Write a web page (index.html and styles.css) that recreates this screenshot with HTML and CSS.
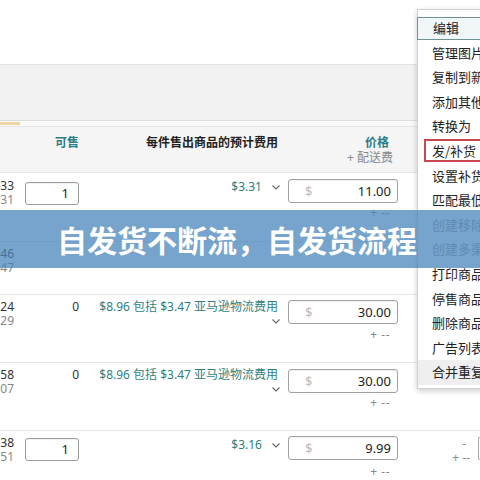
FILE: index.html
```html
<!DOCTYPE html>
<html>
<head>
<meta charset="utf-8">
<link rel="stylesheet" href="styles.css">
</head>
<body>
<div class="page">
  <div class="top"></div>
  <div class="band"></div>
  <div class="tabs"><div class="tab-active"></div></div>

  <div class="row head">
    <div class="c-num"></div>
    <div class="c-qty"><span class="h-link">可售</span></div>
    <div class="c-fee"><span class="h-bold">每件售出商品的预计费用</span></div>
    <div class="c-price"><div class="h-link price-h">价格</div><div class="h-sub">+ 配送费</div></div>
    <div class="c-extra"></div>
  </div>

  <div class="row r1">
    <div class="c-num"><div class="n1">33</div><div class="n2">31</div></div>
    <div class="c-qty"><div class="qty-input m3">1</div></div>
    <div class="c-fee"><div class="fee-line"><span class="fee">$3.31</span><svg class="chev" viewBox="0 0 8 5"><polyline points="0.5,0.5 4,4 7.5,0.5"/></svg></div></div>
    <div class="c-price"><div class="price-input"><span class="cur">$</span><span>11.00</span></div><div class="pm m3">+ --</div></div>
    <div class="c-extra"></div>
  </div>

  <div class="row r2">
    <div class="c-num"><div class="n1">46</div><div class="n2">47</div></div>
    <div class="c-qty"></div>
    <div class="c-fee"></div>
    <div class="c-price"></div>
    <div class="c-extra"></div>
  </div>

  <div class="row r3">
    <div class="c-num"><div class="n1">24</div><div class="n2">29</div></div>
    <div class="c-qty"><div class="qty-text">0</div></div>
    <div class="c-fee"><div class="fee fee-wrap">$8.96 包括 $3.47 亚马逊物流费用</div><div class="chev-line"><svg class="chev" viewBox="0 0 8 5"><polyline points="0.5,0.5 4,4 7.5,0.5"/></svg></div></div>
    <div class="c-price"><div class="price-input"><span class="cur">$</span><span>30.00</span></div><div class="pm m4">+ --</div></div>
    <div class="c-extra"></div>
  </div>

  <div class="row r4">
    <div class="c-num"><div class="n1">58</div><div class="n2">07</div></div>
    <div class="c-qty"><div class="qty-text">0</div></div>
    <div class="c-fee"><div class="fee fee-wrap">$8.96 包括 $3.47 亚马逊物流费用</div><div class="chev-line"><svg class="chev" viewBox="0 0 8 5"><polyline points="0.5,0.5 4,4 7.5,0.5"/></svg></div></div>
    <div class="c-price"><div class="price-input m1"><span class="cur">$</span><span>30.00</span></div><div class="pm m3">+ --</div></div>
    <div class="c-extra"></div>
  </div>

  <div class="row r5">
    <div class="c-num"><div class="n1">38</div><div class="n2">51</div></div>
    <div class="c-qty"><div class="qty-input m2">1</div></div>
    <div class="c-fee"><div class="fee-line m1"><span class="fee">$3.16</span><svg class="chev" viewBox="0 0 8 5"><polyline points="0.5,0.5 4,4 7.5,0.5"/></svg></div></div>
    <div class="c-price"><div class="price-input"><span class="cur">$</span><span>9.99</span></div><div class="pm m5">+ --</div></div>
    <div class="c-extra extra5">
      <div class="extra-text"><div class="dash">-</div><div class="pm2">+ --</div></div>
      <div class="extra-box"></div>
    </div>
  </div>
</div>

<div class="menu">
  <div class="item first">编辑</div>
  <div class="item">管理图片</div>
  <div class="item">复制到新商品</div>
  <div class="item">添加其他状况</div>
  <div class="item">转换为</div>
  <div class="item boxed">发/补货</div>
  <div class="item">设置补货提醒</div>
  <div class="item">匹配最低价</div>
  <div class="item disabled">创建移除订单</div>
  <div class="item disabled">创建多渠道配送订单</div>
  <div class="item">打印商品标签</div>
  <div class="item">停售商品</div>
  <div class="item">删除商品和报价</div>
  <div class="item">广告列表</div>
  <div class="item last">合并重复商品</div>
</div>

<div class="banner">自发货不断流，自发货流程</div>
</body>
</html>
```

FILE: styles.css
```css
* { box-sizing: border-box; }
html, body {
  margin: 0;
  padding: 0;
  width: 480px;
  height: 480px;
  overflow: hidden;
  background: #fff;
  font-family: "Noto Sans", "Noto Sans CJK SC", sans-serif;
  color: #222;
}
.page { width: 480px; }
.top { height: 65px; border-bottom: 1px solid #e2e2e2; background: #fff; }
.band { height: 56px; background: #f2f2f2; border-bottom: 1px solid #dcdcdc; }
.tabs { height: 6px; background: #fafafa; border-bottom: 1px solid #e4e4e4; padding-top: 1px; }
.tab-active { width: 20px; height: 3px; background: #efd6a0; }

.row {
  display: grid;
  grid-template-columns: 15px 65px 206px 112px 82px;
  border-bottom: 1px solid #e6e6e6;
  font-size: 12px;
}
.head { height: 46px; background: #f5f5f5; padding-top: 8px; line-height: 15px; }
.head .c-qty { padding-left: 30px; }
.head .c-fee { text-align: right; padding-right: 8px; }
.h-link { color: #2b7d86; font-weight: 700; }
.h-bold { color: #222; font-weight: 700; }
.head .c-price { display: flex; flex-direction: column; align-items: flex-end; padding-right: 5px; }
.price-h { margin-right: 4px; }
.h-sub { color: #888; }

.r1 { height: 69px; padding-top: 6px; }
.r2 { height: 53px; padding-top: 5px; }
.r3 { height: 68px; padding-top: 5px; }
.r4 { height: 68px; padding-top: 5px; }
.r5 { height: 60px; padding-top: 5px; border-bottom: none; }

.c-num { text-align: right; line-height: 14px; font-size: 12px; padding-right: 1px; }
.n1 { color: #333; }
.n2 { color: #888; }

.c-qty { display: flex; flex-direction: column; align-items: flex-end; padding-right: 1px; }
.qty-input {
  width: 54px;
  height: 23px;
  border: 1px solid #9c9c9c;
  border-radius: 3px;
  background: #fff;
  text-align: right;
  padding-right: 9px;
  line-height: 21px;
  font-size: 13px;
  color: #222;
  box-shadow: inset 0 1px 1px rgba(0,0,0,0.06);
}
.qty-text { line-height: 14px; color: #333; font-size: 12px; }

.c-fee { display: flex; flex-direction: column; align-items: flex-end; padding-right: 6px; }
.fee { color: #2f7f7c; }
.fee-line { display: flex; align-items: center; line-height: 16px; }
.fee-line .chev { margin-left: 10px; }
.fee-wrap { line-height: 14px; margin-right: 2px; white-space: nowrap; }
.chev-line { height: 14px; display: flex; align-items: center; }
.chev { width: 8px; height: 5px; fill: none; stroke: #666; stroke-width: 1.1; }

.c-price { display: flex; flex-direction: column; align-items: flex-end; }
.price-input {
  width: 110px;
  height: 24px;
  border: 1px solid #a2a2a2;
  border-radius: 3px;
  background: #fff;
  display: flex;
  justify-content: space-between;
  align-items: center;
  padding: 0 6px 0 16px;
  font-size: 13px;
  color: #222;
  box-shadow: inset 0 1px 1px rgba(0,0,0,0.06);
}
.cur { color: #bbb; }
.pm { line-height: 14px; color: #888; font-size: 12px; margin-right: 8px; letter-spacing: 0.5px; }

.m1 { margin-top: 1px; }
.m2 { margin-top: 2px; }
.m3 { margin-top: 3px; }
.m4 { margin-top: 4px; }
.m5 { margin-top: 5px; }

.extra5 { display: flex; justify-content: flex-end; }
.extra-text { display: flex; flex-direction: column; align-items: flex-end; line-height: 14px; color: #888; margin-right: 8px; margin-top: 1px; }
.dash { margin-right: 4px; }
.extra-box { width: 2px; height: 23px; margin-top: 1px; border: 1px solid #aaa; border-right: none; border-radius: 3px 0 0 3px; }

.menu {
  position: absolute;
  top: 9px;
  left: 417px;
  width: 96px;
  background: #fff;
  border: 1px solid #d2d2d2;
  box-shadow: 0 2px 6px rgba(0,0,0,0.2);
  padding: 6px 0 3px;
  font-family: "Noto Sans CJK SC", sans-serif;
  font-size: 13px;
}
.item {
  position: relative;
  height: 24.6px;
  line-height: 24.6px;
  padding-left: 14px;
  white-space: nowrap;
  color: #222;
}
.item.first {
  height: 22.6px;
  line-height: 20.6px;
  margin: 1px 0 1px -1px;
  padding-left: 15px;
  border: 1px solid #6f9296;
  background: #f1f7f8;
}
.item.boxed::after {
  content: "";
  position: absolute;
  top: 0;
  bottom: 2px;
  left: 6px;
  right: -4px;
  border: 2px solid #c8464e;
}
.item.disabled { color: #9a9a9a; }
.item.last { background: #efefef; }

.banner {
  position: absolute;
  top: 210px;
  left: 0;
  width: 480px;
  height: 58px;
  background: rgba(72, 132, 186, 0.74);
  color: #fff;
  font-family: "Noto Sans CJK SC", sans-serif;
  font-weight: 700;
  font-size: 30px;
  line-height: 58px;
  text-align: center;
  padding-right: 6px;
}
```
